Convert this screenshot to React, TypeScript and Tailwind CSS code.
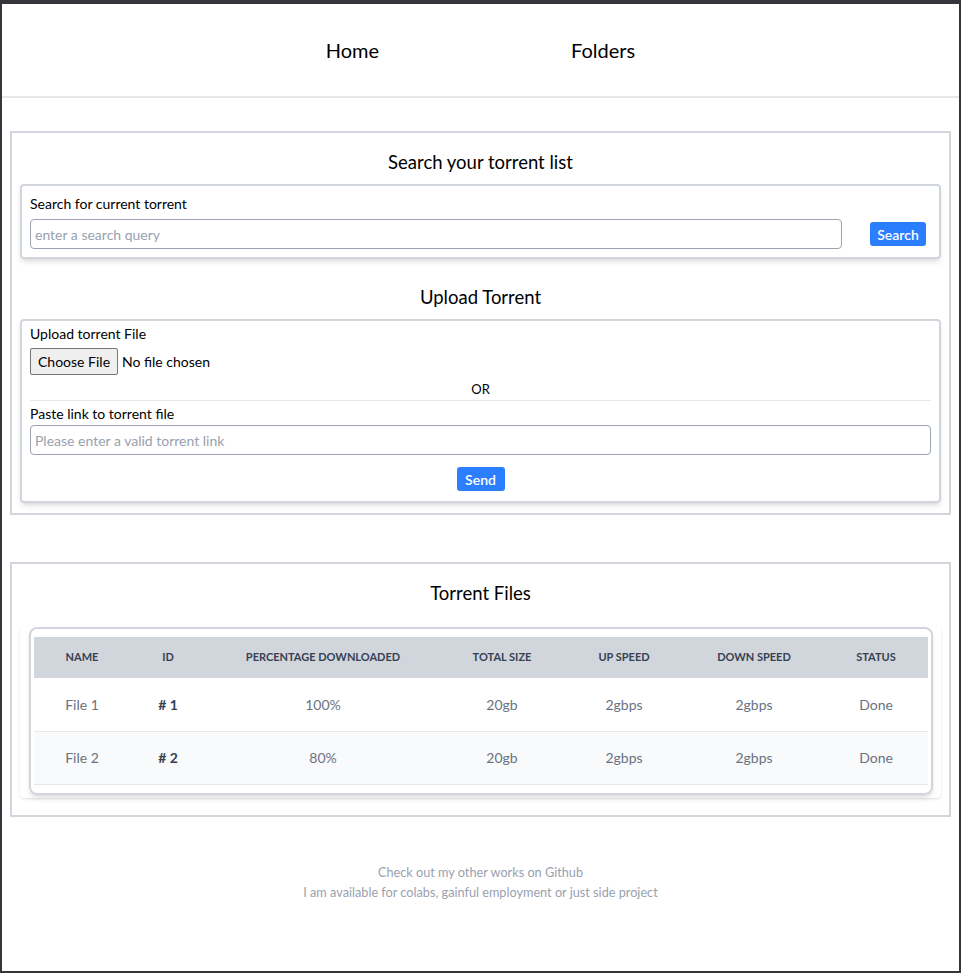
import React from "react";

const rows = [
  { name: "File 1", id: "# 1", pct: "100%", size: "20gb", up: "2gbps", down: "2gbps", status: "Done" },
  { name: "File 2", id: "# 2", pct: "80%", size: "20gb", up: "2gbps", down: "2gbps", status: "Done" },
];

const cols = [
  { label: "Name", w: "w-[96px]" },
  { label: "ID", w: "w-[76px]" },
  { label: "Percentage Downloaded", w: "w-[234px]" },
  { label: "Total Size", w: "w-[124px]" },
  { label: "Up Speed", w: "w-[120px]" },
  { label: "Down Speed", w: "w-[140px]" },
  { label: "Status", w: "w-[104px]" },
];

const App: React.FC = () => {
  return (
    <div className="h-[973px] border-t-4 border-x-2 border-b-2 border-[#36363a] bg-white font-['Lato',sans-serif] text-black flex flex-col">
      <nav className="h-[94px] border-b-2 border-gray-200 flex items-center justify-center gap-[192px] text-[20px]">
        <a className="cursor-pointer">Home</a>
        <a className="cursor-pointer">Folders</a>
      </nav>

      <div className="px-2 pt-[33px]">
        <section className="border-2 border-gray-300 px-2 pt-[17px] pb-[10px]">
          <h2 className="text-center text-[18.5px] leading-6">Search your torrent list</h2>
          <div className="mt-[10px] border-2 border-gray-300 rounded shadow-md px-2 pt-[8px] pb-[8px]">
            <label className="block text-[14px] leading-5">Search for current torrent</label>
            <div className="mt-[5px] flex items-center">
              <input
                className="flex-1 h-[30px] border border-gray-400 rounded px-[4px] text-[14px] placeholder:text-gray-400 outline-none"
                placeholder="enter a search query"
              />
              <button className="ml-[28px] mr-[5px] w-[56px] h-6 bg-blue-500 text-white text-[14px] font-semibold rounded-[3px]">
                Search
              </button>
            </div>
          </div>

          <h2 className="mt-[26px] text-center text-[18.5px] leading-6">Upload Torrent</h2>
          <div className="mt-[10px] border-2 border-gray-300 rounded shadow-md px-2 pt-[3px] pb-[10px]">
            <label className="block text-[14px] leading-5">Upload torrent File</label>
            <input
              type="file"
              className="mt-[4px] block text-[14px] file:mr-[4px] file:h-[27px] file:px-[7px] file:bg-[#efefef] file:border file:border-[#767676] file:rounded-[2px] file:text-black"
            />
            <p className="mt-[4px] text-center text-[13px] leading-5">OR</p>
            <hr className="mt-[1px] border-gray-200" />
            <label className="mt-[3px] block text-[14px] leading-5">Paste link to torrent file</label>
            <input
              className="mt-[1px] w-full h-[30px] border border-gray-400 rounded px-[4px] text-[14px] placeholder:text-gray-400 outline-none"
              placeholder="Please enter a valid torrent link"
            />
            <div className="mt-3 flex justify-center">
              <button className="h-6 w-[48px] bg-blue-500 text-white text-[14px] font-semibold rounded-[3px]">Send</button>
            </div>
          </div>
        </section>

        <section className="mt-[47px] border-2 border-gray-300 px-2 pt-[17px] pb-[17px]">
          <h2 className="text-center text-[18.5px] leading-6">Torrent Files</h2>
          <div className="mt-[21px] rounded shadow-sm pt-[1px] pb-[3px] pl-[9px] pr-[8px]">
            <div className="border-2 border-gray-300 rounded-lg shadow-md px-[3px] pt-2 pb-2">
              <table className="w-full table-fixed border-collapse">
                <thead className="bg-gray-300">
                  <tr className="h-[41px]">
                    {cols.map((c) => (
                      <th key={c.label} className={`${c.w} text-center text-[11px] font-bold uppercase text-gray-700`}>
                        {c.label}
                      </th>
                    ))}
                  </tr>
                </thead>
                <tbody>
                  {rows.map((r, i) => (
                    <tr key={r.id} className={`border-b border-gray-200 h-[53px] text-[14px] text-gray-500 text-center ${i === 1 ? "bg-gray-50" : "bg-white"}`}>
                      <td>{r.name}</td>
                      <td className="font-bold text-gray-700">{r.id}</td>
                      <td>{r.pct}</td>
                      <td>{r.size}</td>
                      <td>{r.up}</td>
                      <td>{r.down}</td>
                      <td>{r.status}</td>
                    </tr>
                  ))}
                </tbody>
              </table>
            </div>
          </div>
        </section>
      </div>

      <footer className="mt-[45px] text-center text-[12.7px] leading-5 text-gray-400">
        <p>Check out my other works on Github</p>
        <p>I am available for colabs, gainful employment or just side project</p>
      </footer>
    </div>
  );
};

export default App;
